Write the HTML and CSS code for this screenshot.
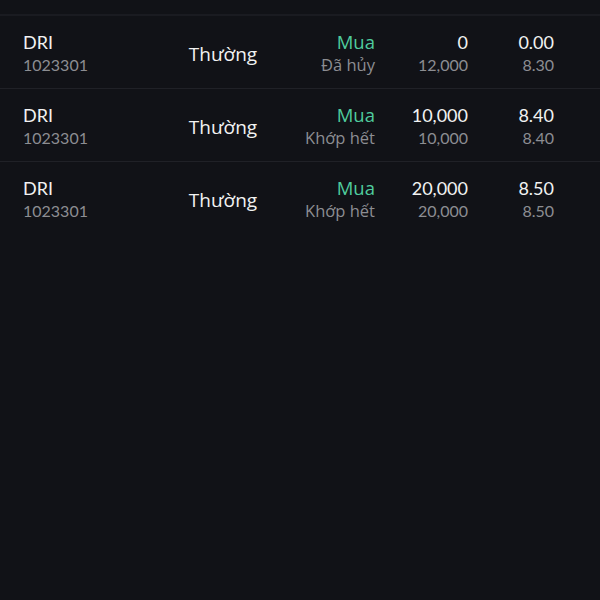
FILE: index.html
```html
<!DOCTYPE html>
<html lang="vi">

<head>
  <meta charset="UTF-8" />
  <meta name="viewport" content="width=device-width, initial-scale=1.0" />
  <title>Sổ lệnh</title>
  <link rel="stylesheet" href="styles.css">
</head>

<body>
  <div class="order-list">
    <div class="list-top"></div>

    <div class="order-row">
      <div class="col code">
        <span class="main">DRI</span>
        <span class="sub">1023301</span>
      </div>
      <div class="col type">Thường</div>
      <div class="col side">
        <span class="main buy">Mua</span>
        <span class="sub">Đã hủy</span>
      </div>
      <div class="col qty">
        <span class="main">0</span>
        <span class="sub">12,000</span>
      </div>
      <div class="col price">
        <span class="main">0.00</span>
        <span class="sub">8.30</span>
      </div>
    </div>

    <div class="order-row">
      <div class="col code">
        <span class="main">DRI</span>
        <span class="sub">1023301</span>
      </div>
      <div class="col type">Thường</div>
      <div class="col side">
        <span class="main buy">Mua</span>
        <span class="sub">Khớp hết</span>
      </div>
      <div class="col qty">
        <span class="main">10,000</span>
        <span class="sub">10,000</span>
      </div>
      <div class="col price">
        <span class="main">8.40</span>
        <span class="sub">8.40</span>
      </div>
    </div>

    <div class="order-row last">
      <div class="col code">
        <span class="main">DRI</span>
        <span class="sub">1023301</span>
      </div>
      <div class="col type">Thường</div>
      <div class="col side">
        <span class="main buy">Mua</span>
        <span class="sub">Khớp hết</span>
      </div>
      <div class="col qty">
        <span class="main">20,000</span>
        <span class="sub">20,000</span>
      </div>
      <div class="col price">
        <span class="main">8.50</span>
        <span class="sub">8.50</span>
      </div>
    </div>
  </div>
</body>

</html>
```

FILE: styles.css
```css
html,
body {
  margin: 0;
  height: 100%;
  background-color: #111217;
}

body {
  overflow: hidden;
  font-family: Lato, "Noto Sans", sans-serif;
  color: #f2f2f2;
}

.order-list {
  display: flex;
  flex-direction: column;
}

.list-top {
  height: 14px;
  border-bottom: 2px solid #1a1b21;
}

.order-row {
  display: grid;
  grid-template-columns: 130px 140px 82px 93px 86px;
  align-items: center;
  height: 68px;
  padding: 4px 46px 0 23px;
  border-bottom: 1px solid #202127;
}

.order-row.last {
  border-bottom: none;
}

.col {
  display: flex;
  flex-direction: column;
}

.col .main {
  font-size: 18px;
  line-height: 22px;
  color: #f2f2f2;
}

.col .sub {
  font-size: 16px;
  line-height: 24px;
  color: #8c8d92;
}

.side .main,
.side .sub,
.type {
  font-family: "Open Sans", Lato, sans-serif;
}

.side .main {
  font-size: 18.5px;
}

.side .sub {
  font-size: 16.5px;
}

.col .main.buy {
  color: #4fcb9d;
}

.type {
  text-align: center;
  font-size: 19px;
  color: #f2f2f2;
}

.side,
.qty,
.price {
  text-align: right;
}
```
